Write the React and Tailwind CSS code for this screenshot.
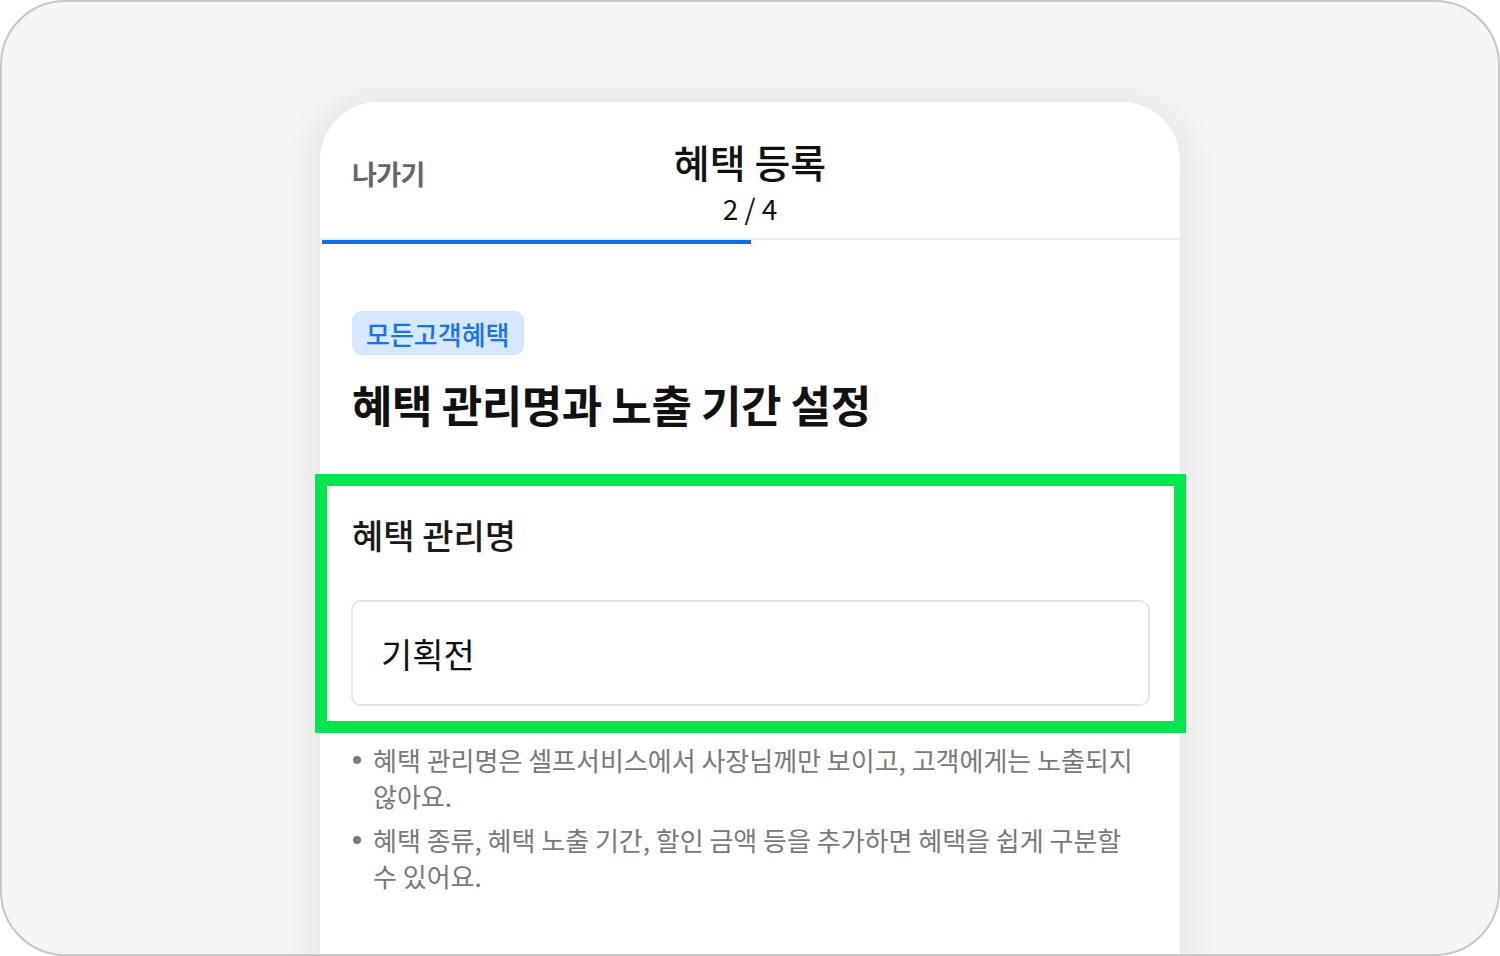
import React from 'react';

const font = { fontFamily: '"Noto Sans CJK KR", "Noto Sans", sans-serif' };

const notes = [
  '혜택 관리명은 셀프서비스에서 사장님께만 보이고, 고객에게는 노출되지 않아요.',
  '혜택 종류, 혜택 노출 기간, 할인 금액 등을 추가하면 혜택을 쉽게 구분할 수 있어요.',
];

const App = () => {
  return (
    <div className="w-[1500px] h-[956px] bg-white" style={font}>
      <div className="w-full h-full rounded-[65px] border-2 border-[#c6c6c6] bg-[#f5f5f5] overflow-hidden pt-[100px]">
        {/* phone card */}
        <div className="mx-auto w-[860px] h-[900px] bg-white rounded-t-[58px] shadow-[0_0_40px_rgba(0,0,0,0.09)]">

          {/* header */}
          <div className="grid grid-cols-[1fr_auto_1fr] h-[136px] pt-[37px] px-[32px]">
            <div className="mt-[18px] text-[27px] leading-[34px] font-semibold text-[#666] tracking-[-0.02em]">
              나가기
            </div>
            <div className="flex flex-col items-center">
              <div className="text-[39px] leading-[44px] font-medium text-[#111]">혜택 등록</div>
              <div className="mt-[8px] text-[28px] leading-[34px] text-[#111]">2 / 4</div>
            </div>
            <div />
          </div>

          {/* progress */}
          <div className="h-[2px] bg-[#eeeeee]" />
          <div className="h-[4px] w-[429px] ml-[2px] bg-[#0b6ff2]" />

          {/* body */}
          <div className="px-[32px] pt-[67px]">
            <span className="inline-flex items-center h-[44px] px-[14px] rounded-[9px] bg-[#d5e8fc] text-[#1672f0] text-[26px] font-medium">
              모든고객혜택
            </span>

            <h1 className="mt-[23px] text-[44px] leading-[52px] font-bold text-[#111] tracking-[-0.01em]">
              혜택 관리명과 노출 기간 설정
            </h1>

            {/* highlighted field */}
            <div className="mt-[44px] ml-[-37px] mr-[-38px] border-[12px] border-[#00e64c] px-[24px] pt-[29px] pb-[15px]">
              <div className="ml-[1px] text-[34px] leading-[40px] font-medium text-[#1a1a1a]">
                혜택 관리명
              </div>
              <div className="mt-[45px] h-[106px] flex items-center rounded-[10px] border-2 border-[#e6e6e6] pl-[28px]">
                <span className="text-[34px] text-[#111]">기획전</span>
              </div>
            </div>

            {/* notes */}
            <ul className="mt-[9px] pr-[8px] flex flex-col gap-[8px]">
              {notes.map((n, i) => (
                <li key={i} className="flex items-start">
                  <span className="mt-[14px] ml-[1px] mr-[12px] w-[8px] h-[8px] rounded-full bg-[#7a7a7a] shrink-0" />
                  <span className="text-[26px] leading-[36px] text-[#787878] [word-break:keep-all]">
                    {n}
                  </span>
                </li>
              ))}
            </ul>
          </div>
        </div>
      </div>
    </div>
  );
};

export default App;
